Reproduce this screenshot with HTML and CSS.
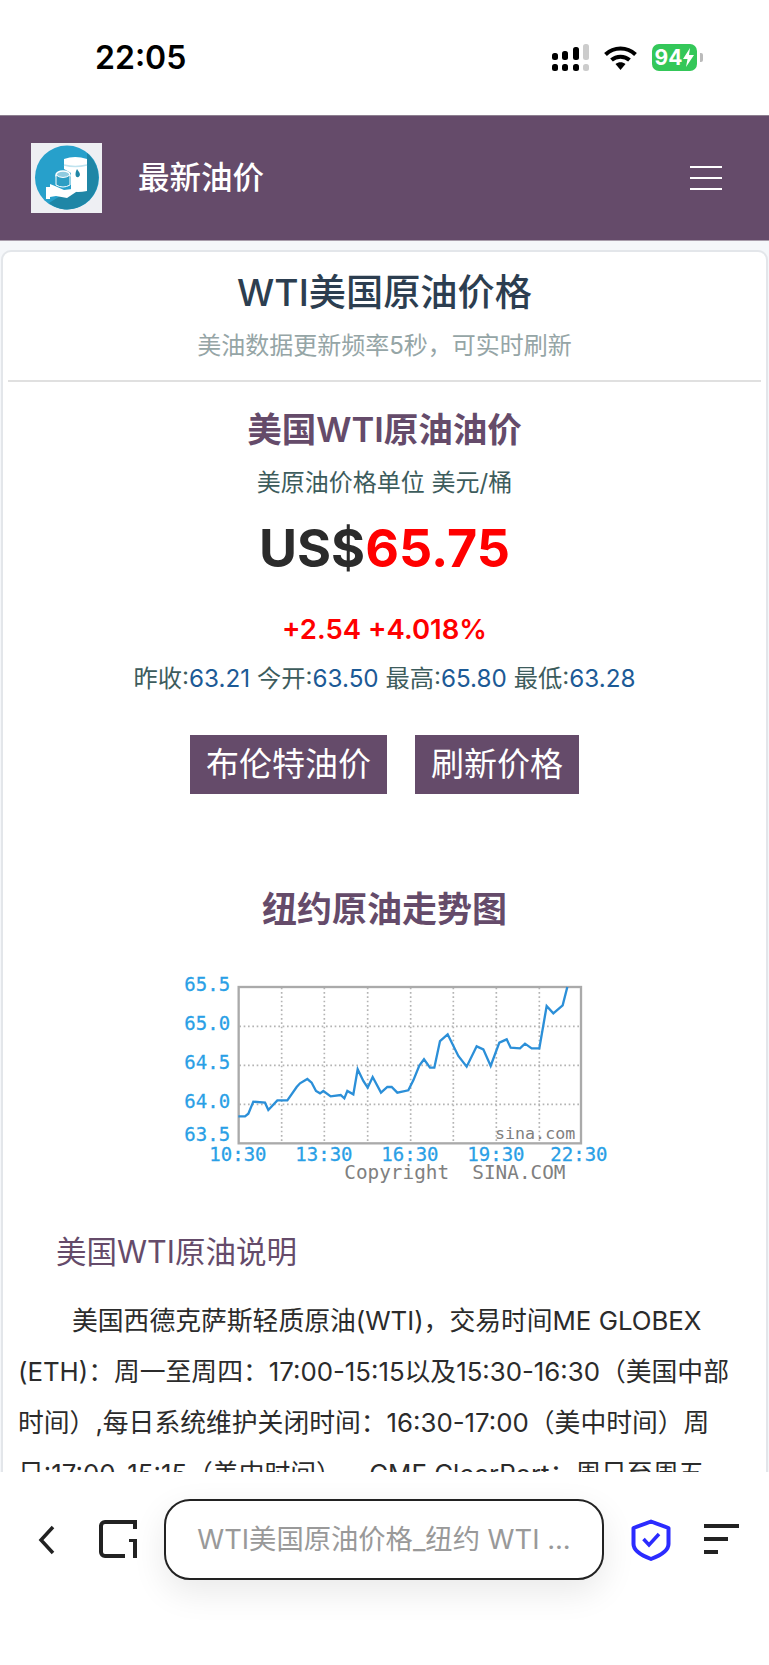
FILE: index.html
```html
<!DOCTYPE html>
<html lang="zh-CN">
<head>
  <meta charset="UTF-8" />
  <meta name="viewport" content="width=device-width, initial-scale=1.0"/>
  <title>WTI美国原油价格</title>
  <link rel="stylesheet" href="styles.css">
</head>
<body>
  <div class="phone">
    <div class="status-bar">
      <span class="clock">22:05</span>
      <div class="status-icons">
        <svg class="signal" width="37" height="27" viewBox="0 0 37 27">
          <rect x="0" y="9" width="6" height="7" rx="2.5" fill="#000"/>
          <rect x="0" y="20" width="6" height="7" rx="2.5" fill="#000"/>
          <rect x="10" y="7" width="6" height="9" rx="2.5" fill="#000"/>
          <rect x="10" y="20" width="6" height="7" rx="2.5" fill="#000"/>
          <rect x="21" y="3" width="6" height="13" rx="2.5" fill="#000"/>
          <rect x="21" y="20" width="6" height="7" rx="2.5" fill="#000"/>
          <rect x="31" y="0" width="6" height="16" rx="2.5" fill="#ccc"/>
          <rect x="31" y="20" width="6" height="7" rx="2.5" fill="#ccc"/>
        </svg>
        <svg class="wifi" width="33" height="24" viewBox="0 0 33 24">
          <path d="M1.5 8.5C10 0.5 23 0.5 31.5 8.5" fill="none" stroke="#000" stroke-width="4"/>
          <path d="M7.5 14C12.5 9.5 20.5 9.5 25.5 14" fill="none" stroke="#000" stroke-width="4"/>
          <path d="M11.5 18C14.5 15.5 18.5 15.5 21.5 18L16.5 24Z" fill="#000"/>
        </svg>
        <div class="battery">
          <span class="battery-level">94</span>
          <svg width="11" height="19" viewBox="0 0 11 19"><path d="M7 0L0 11H4.5L3 19L11 7H6Z" fill="#fff"/></svg>
          <i class="battery-nub"></i>
        </div>
      </div>
    </div>

    <header class="navbar">
      <svg class="logo" width="71" height="70" viewBox="0 0 71 70">
        <rect width="71" height="70" fill="#eeeff3"/>
        <circle cx="36" cy="34.5" r="32" fill="#27a0cb"/>
        <path d="M56 10A32 32 0 0 1 36 66.5C29 66.5 23 64 18 60L34 50L42 48L56 48Z" fill="#1f86a6"/>
        <!-- barrel -->
        <path d="M33 16Q44 12 56 16V48Q46 50 40 48V30L33 26Z" fill="#fff"/>
        <path d="M33 22Q44 25 56 22" fill="none" stroke="#bfe3ef" stroke-width="1.5"/>
        <path d="M46 26C49 30 50 32 47.5 34C45 35 43 32 46 26Z" fill="#1f86a6"/>
        <!-- coins -->
        <ellipse cx="32" cy="32" rx="7" ry="4" fill="#8fcbe0" stroke="#fff" stroke-width="1.5"/>
        <path d="M25 32V42Q32 46 39 42V32Q32 37 25 32Z" fill="#2d9ec4" stroke="#fff" stroke-width="1"/>
        <!-- hand -->
        <path d="M15 44H19V41L24 43L33 47L41 46L49 41L45 49L36 55L25 53L19 54V56H15Z" fill="#fff"/>
      </svg>
      <span class="brand">最新油价</span>
      <button class="nav-toggle" type="button"><i></i><i></i><i></i></button>
    </header>

    <main class="content">
      <section class="card">
        <div class="card-head">
          <h1>WTI美国原油价格</h1>
          <p class="subtitle">美油数据更新频率5秒，可实时刷新</p>
        </div>

        <div class="quote">
          <h2>美国WTI原油油价</h2>
          <p class="unit">美原油价格单位 美元/桶</p>
          <p class="price">US$<span>65.75</span></p>
          <p class="change">+2.54 +4.018%</p>
          <p class="ranges">昨收:<b>63.21</b> 今开:<b>63.50</b> 最高:<b>65.80</b> 最低:<b>63.28</b></p>
          <div class="actions">
            <a class="btn">布伦特油价</a>
            <a class="btn">刷新价格</a>
          </div>
        </div>

        <h2 class="chart-title">纽约原油走势图</h2>
        <svg class="chart" width="480" height="240" viewBox="0 0 1440 720">
          <g class="grid">
            <path d="M395 80V545M523 80V545M653 80V545M782 80V545M910 80V545M1039 80V545M1168 80V545"/>
            <path d="M268 196H1290M268 313H1290M268 430H1290"/>
          </g>
          <rect class="frame" x="266" y="78" width="1027" height="469"/>
          <text class="stamp" x="1035" y="533">sina.com</text>
          <polyline class="line" points="265,466 285,466 295,458 310,422 345,425 355,447 382,418 412,418 440,378 450,367 472,354 485,365 498,390 510,397 520,390 542,406 572,402 583,412 592,390 610,400 623,325 640,360 653,380 668,348 693,395 712,378 725,378 742,395 775,388 790,358 808,314 822,295 840,320 853,320 870,240 893,220 925,285 950,317 980,256 1000,265 1022,315 1048,245 1070,235 1082,260 1110,262 1125,248 1145,262 1168,262 1190,135 1210,157 1238,133 1252,78"/>
          <g class="axis">
            <text x="103" y="91">65.5</text>
            <text x="103" y="207">65.0</text>
            <text x="103" y="324">64.5</text>
            <text x="103" y="442">64.0</text>
            <text x="103" y="540">63.5</text>
            <text x="178" y="600">10:30</text>
            <text x="436" y="600">13:30</text>
            <text x="694" y="600">16:30</text>
            <text x="952" y="600">19:30</text>
            <text x="1201" y="600">22:30</text>
          </g>
          <text class="credit" x="583" y="655">Copyright  SINA.COM</text>
        </svg>

        <h3 class="note-title">美国WTI原油说明</h3>
        <p class="note">美国西德克萨斯轻质原油(WTI)，交易时间ME GLOBEX (ETH)：周一至周四：17:00-15:15以及15:30-16:30（美国中部时间）,每日系统维护关闭时间：16:30-17:00（美中时间）周日:17:00-15:15（美中时间）。&nbsp; CME ClearPort：周日至周五</p>
      </section>
    </main>

    <footer class="toolbar">
      <svg class="back-icon" width="17" height="30" viewBox="0 0 17 30"><path d="M15 2L3 15L15 28" fill="none" stroke="#222" stroke-width="3.5"/></svg>
      <svg class="tabs-icon" width="40" height="40" viewBox="0 0 40 40">
        <path d="M38 3H7A4 4 0 0 0 3 7V33A4 4 0 0 0 7 37H27" fill="none" stroke="#222" stroke-width="4"/>
        <rect x="35" y="1" width="4" height="9" fill="#222"/>
        <path d="M35 20H39V39H35V23H31V20Z" fill="#222"/>
      </svg>
      <div class="address">WTI美国原油价格_纽约 WTI ...</div>
      <svg class="shield" width="40" height="42" viewBox="0 0 40 42">
        <path d="M20 2.5L37.5 9V25C37.5 32 28 37 20 40C12 37 2.5 32 2.5 25V9Z" fill="none" stroke="#2b2bff" stroke-width="4" stroke-linejoin="round"/>
        <path d="M12.5 20L18 26L28 15" fill="none" stroke="#2b2bff" stroke-width="3.5"/>
      </svg>
      <div class="menu-lines"><i></i><i></i><i></i></div>
    </footer>
  </div>
</body>
</html>
```

FILE: styles.css
```css
:root {
  --plum: #654b6a;
  --ink: #2c3e50;
  --slate: #3d5c5c;
  --muted: #95a5a6;
  --up: #ff0000;
  --value: #1c5a96;
}

* {
  box-sizing: border-box;
}

body {
  margin: 0;
  font-family: Inter, "Noto Sans CJK SC", sans-serif;
  background: #fff;
  color: var(--ink);
}

.phone {
  height: 100vh;
  display: flex;
  flex-direction: column;
  overflow: hidden;
}

/* status bar */
.status-bar {
  flex: 0 0 115px;
  display: flex;
  align-items: center;
  justify-content: space-between;
  padding: 0 72px 0 95px;
  background: #fff;
}

.clock {
  font-size: 32px;
  font-weight: 600;
  color: #000;
}

.status-icons {
  display: flex;
  align-items: center;
  gap: 15px;
}

.battery {
  position: relative;
  width: 45px;
  height: 27px;
  display: flex;
  align-items: center;
  justify-content: center;
  gap: 1px;
  border-radius: 7px;
  background: #34c759;
}

.battery-level {
  font-size: 21px;
  font-weight: 700;
  color: #fff;
}

.battery-nub {
  position: absolute;
  right: -6px;
  top: 9px;
  width: 3px;
  height: 9px;
  border-radius: 0 2px 2px 0;
  background: #bbb;
}

/* top nav */
.navbar {
  flex: 0 0 126px;
  display: flex;
  align-items: center;
  padding: 0 47px 0 31px;
  background: var(--plum);
  border-top: 1px solid #8d7f90;
  border-bottom: 1px solid #a99eac;
}

.logo {
  filter: blur(0.4px);
}

.brand {
  margin: 0 0 6px 36px;
  font-size: 31.5px;
  font-weight: 500;
  color: #fff;
}

.nav-toggle {
  margin-left: auto;
  width: 32px;
  display: flex;
  flex-direction: column;
  gap: 9px;
  padding: 0;
  border: none;
  background: none;
}

.nav-toggle i {
  display: block;
  height: 2px;
  background: #fff;
}

/* page body */
.content {
  flex: 1;
  min-height: 0;
  overflow: hidden;
  padding: 9px 1px 0;
  background: #f5f7fa;
}

.card {
  background: #fff;
  border: 2px solid #e3e6ea;
  border-radius: 10px;
  padding: 0 5px;
  text-align: center;
}

.card-head {
  padding: 16px 0 17px;
  border-bottom: 2px solid #e0e0e0;
}

h1 {
  margin: 0;
  font-size: 37.2px;
  line-height: 50px;
  font-weight: 500;
  color: var(--ink);
}

.subtitle {
  margin: 11px 0 0;
  font-size: 24px;
  line-height: 34px;
  color: var(--muted);
}

.quote {
  padding-top: 25px;
}

h2 {
  margin: 0;
  font-size: 34.5px;
  line-height: 46px;
  font-weight: 600;
  color: var(--plum);
}

.unit {
  margin: 13px 0 0;
  font-size: 24px;
  line-height: 34px;
  color: var(--slate);
}

.price {
  margin: 16px 0 0;
  font-size: 52px;
  line-height: 66px;
  font-weight: 700;
  color: #2b2b2b;
}

.price span {
  color: var(--up);
}

.change {
  margin: 29px 0 0;
  font-size: 27.5px;
  line-height: 36px;
  font-weight: 600;
  color: var(--up);
}

.ranges {
  margin: 15px 0 0;
  font-size: 24.25px;
  line-height: 34px;
  color: var(--slate);
}

.ranges b {
  font-weight: 400;
  color: var(--value);
}

.actions {
  display: flex;
  justify-content: center;
  gap: 28px;
  margin-top: 39px;
}

.btn {
  padding: 0 16px;
  font-size: 33px;
  line-height: 59px;
  color: #fff;
  background: var(--plum);
}

.chart-title {
  margin-top: 92px;
  font-size: 35px;
}

.chart {
  display: block;
  margin: 29px 0 31px 142px;
}

.grid path {
  fill: none;
  stroke: #b4b4b4;
  stroke-width: 5;
  stroke-dasharray: 5 8;
}

.frame {
  fill: none;
  stroke: #aaa;
  stroke-width: 7;
}

.line {
  fill: none;
  stroke: #2b8fd8;
  stroke-width: 7;
}

.chart text {
  font-family: "DejaVu Sans Mono", monospace;
  font-size: 57px;
  white-space: pre;
}

.axis text {
  fill: #2a9fe6;
  stroke: #2a9fe6;
  stroke-width: 0.8;
}

.chart .credit {
  font-size: 58px;
  fill: #808080;
}

.chart .stamp {
  font-size: 50px;
  fill: #808080;
}

.note-title {
  margin: 0;
  padding-left: 48px;
  text-align: left;
  font-size: 30.5px;
  line-height: 40px;
  font-weight: 400;
  color: var(--plum);
}

.note {
  margin: 23px 0 0;
  padding: 0 10px;
  text-align: left;
  text-indent: 54px;
  font-size: 25.8px;
  line-height: 51px;
  color: #2b2b2b;
}

/* browser toolbar */
.toolbar {
  flex: 0 0 193px;
  display: flex;
  align-items: flex-start;
  padding: 27px 0 0 38px;
  background: #fff;
}

.back-icon {
  margin-top: 26px;
}

.tabs-icon {
  margin: 20px 0 0 43px;
}

.address {
  width: 440px;
  height: 81px;
  margin-left: 26px;
  border: 2px solid #222;
  border-radius: 26px;
  background: #fff;
  box-shadow: 0 12px 34px rgba(0,0,0,0.09);
  font-size: 27.3px;
  line-height: 77px;
  text-align: center;
  color: #999;
  white-space: nowrap;
}

.shield {
  margin: 20px 0 0 27px;
}

.menu-lines {
  display: flex;
  flex-direction: column;
  gap: 9px;
  width: 35px;
  margin: 25px 0 0 33px;
}

.menu-lines i {
  display: block;
  height: 4px;
  background: #222;
}

.menu-lines i:nth-child(2) {
  width: 24px;
}

.menu-lines i:nth-child(3) {
  width: 14px;
}
```
